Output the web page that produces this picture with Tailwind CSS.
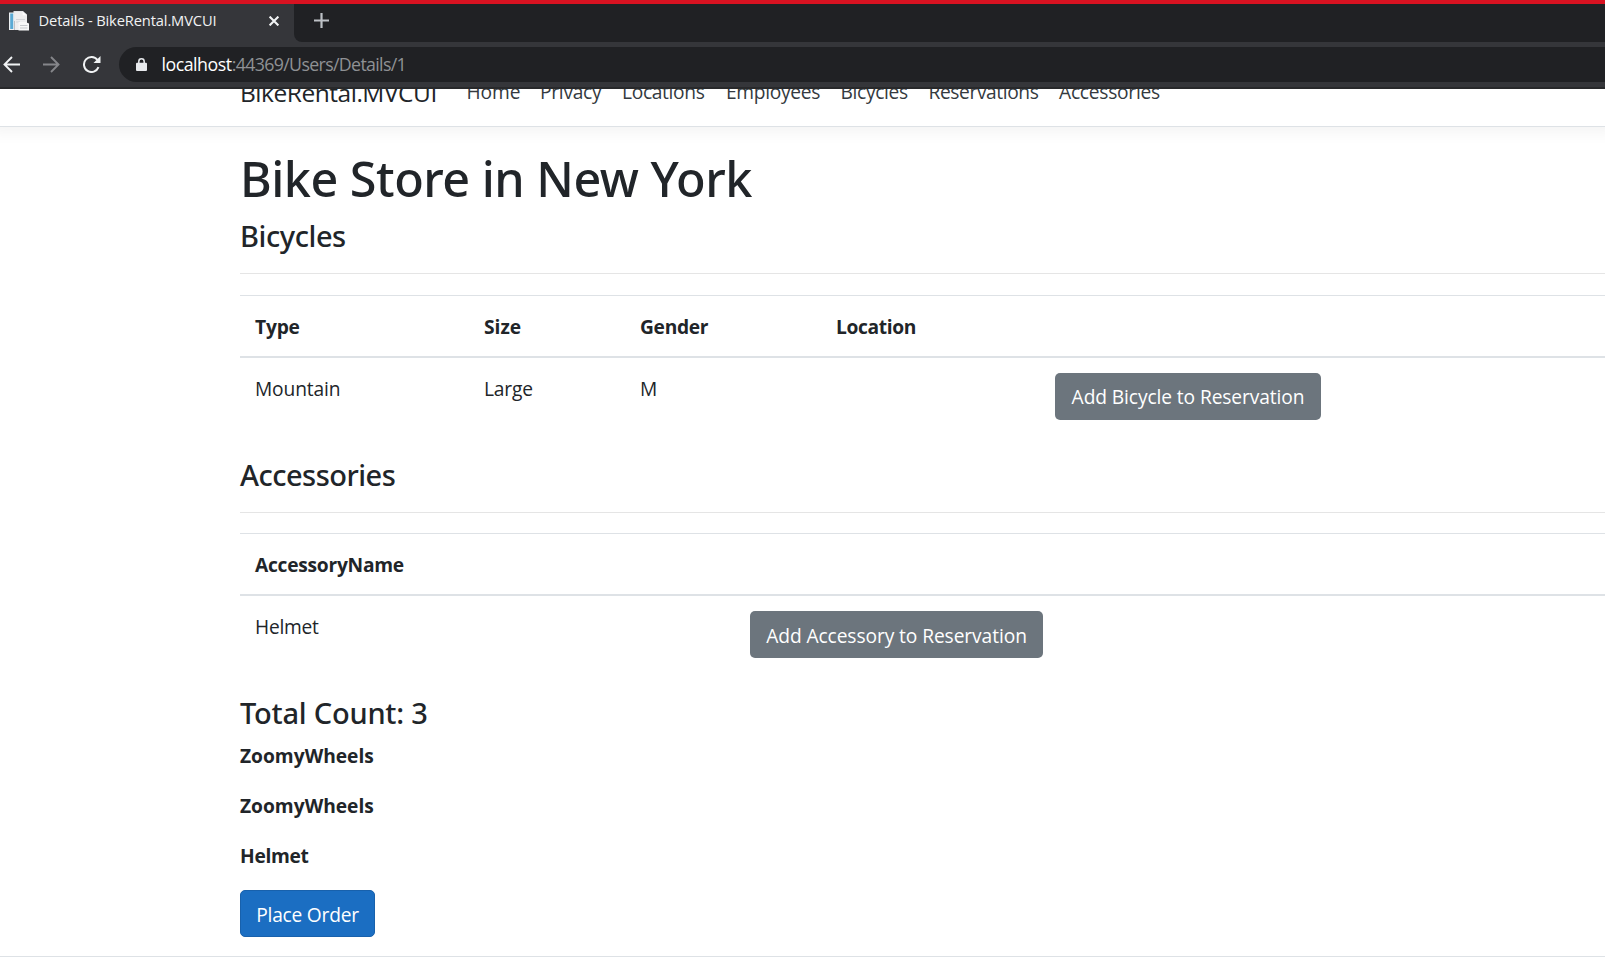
<!DOCTYPE html>
<html lang="en">
<head>
<meta charset="utf-8">
<title>Details - BikeRental.MVCUI</title>
<script src="https://cdn.jsdelivr.net/npm/@tailwindcss/browser@4"></script>
</head>
<body class="flex h-[961px] w-[1605px] flex-col overflow-hidden bg-white font-['Open_Sans','Noto_Sans',sans-serif] text-[19.2px] leading-[30px] text-[#212529]">

<!-- Browser chrome -->
<div class="h-1 shrink-0 bg-[#d81221]"></div>
<div class="flex h-[38px] shrink-0 bg-[#35363a]">
  <div class="flex h-[38px] w-[294px] items-center rounded-tr-[7px] bg-[#35363a] pb-1 pl-[9px]">
    <svg class="h-5 w-5 shrink-0" viewBox="0 0 20 20">
      <path d="M4.500 0H14l4 3.500V10H4.500z" fill="#dfe1e4"/>
      <path d="M0 1.500h5.500V19H0z" fill="#eef1f3"/>
      <path d="M1.200 2.500h3v15.500h-3z" fill="#5aaad4"/>
      <path d="M5.500 .8h8v3.700H18V19H5.500z" fill="#eeeeef"/>
      <path d="M13.500 .5L18 4.500h-4.500z" fill="#fff"/>
      <path d="M7 8.500h9M7 11h4" stroke="#d3d5d9"/>
      <path d="M9.500 11h7l3.500 1.500v7H9.500z" fill="#f8f8f8"/>
      <path d="M11 14.500h7.500M11 17h7.500" stroke="#c6c9cd"/>
    </svg>
    <span class="-mt-[2px] ml-[9.5px] w-[230px] whitespace-nowrap text-[14.7px] leading-5 tracking-[-0.138px] text-[#f1f2f3]">Details - BikeRental.MVCUI</span>
    <svg class="mr-[15px] h-[10px] w-[10px] shrink-0" viewBox="0 0 10 10" fill="none" stroke="#f1f3f4" stroke-width="2.100"><path d="M.6.6l8.800 8.800M9.400.6L.6 9.400"/></svg>
  </div>
  <div class="flex flex-1 items-center rounded-bl-[8px] bg-[#202124] pb-[5px] pl-5">
    <svg class="h-[15px] w-[15px]" viewBox="0 0 15 15" stroke="#bdc1c6" stroke-width="2.200"><path d="M7.500 0v15M0 7.500h15"/></svg>
  </div>
</div>
<div class="flex h-[45px] shrink-0 items-center bg-[#35363a]">
  <svg class="ml-[3px] h-[17px] w-[17px]" viewBox="0 0 17 17" fill="none" stroke="#f1f3f4" stroke-width="1.900"><path d="M17 8.500H1.500M9 1L1.500 8.500 9 16"/></svg>
  <svg class="ml-[23px] h-[17px] w-[17px]" viewBox="0 0 17 17" fill="none" stroke="#85868a" stroke-width="1.900"><path d="M0 8.500h15.500M8 1l7.500 7.500L8 16"/></svg>
  <svg class="ml-[23px] h-[17px] w-[18px]" viewBox="0 0 18 17" fill="none" stroke="#f1f3f4" stroke-width="2"><path d="M15.500 11.200A7.500 7.500 0 1 1 14.500 4"/><path d="M17.500 0v7h-7z" fill="#f1f3f4" stroke="none"/></svg>
  <div class="ml-[18px] flex h-[35px] flex-1 items-center rounded-l-full bg-[#202124] pl-[17px]">
    <svg class="h-[13px] w-[11px]" viewBox="0 0 11 13"><path d="M2.800 6V3.500a2.700 2.700 0 0 1 5.400 0V6" fill="none" stroke="#e8eaed" stroke-width="1.500"/><rect y="4.800" width="11" height="8.200" rx="1" fill="#e8eaed"/></svg>
    <span class="-mt-[2px] ml-[14.5px] w-[70.2px] whitespace-nowrap text-[17.8px] leading-6 tracking-[-0.5px] text-white">localhost</span>
    <span class="-mt-[2px] whitespace-nowrap text-[17.8px] leading-6 tracking-[-0.66px] text-[#8f9194]">:44369/Users/Details/1</span>
  </div>
</div>
<div class="h-[2px] shrink-0 bg-[#28292b]"></div>

<!-- Page viewport, scrolled slightly down -->
<div class="flex-1 overflow-hidden">
  <header class="flex h-[38px] overflow-hidden border-b border-[#dee2e6] pl-60 shadow-[0_-5px_15px_10px_rgba(0,0,0,0.05)]">
    <a class="-mt-[15px] w-[226.5px] whitespace-nowrap text-[24.5px] leading-[37px] tracking-[-0.47px]">BikeRental.MVCUI</a>
    <nav class="-mt-3 flex whitespace-nowrap text-[#343a40]">
      <a class="w-[73.5px] tracking-[-0.1px]">Home</a>
      <a class="w-[82px] tracking-[-0.27px]">Privacy</a>
      <a class="w-[104px] tracking-[-0.33px]">Locations</a>
      <a class="w-[114.5px] tracking-[-0.32px]">Employees</a>
      <a class="w-[88px] tracking-[-0.33px]">Bicycles</a>
      <a class="w-[130.5px] tracking-[-0.4px]">Reservations</a>
      <a class="tracking-[-0.25px]">Accessories</a>
    </nav>
  </header>

  <main class="pt-[21px] pl-60">
    <h1 class="h-[60px] font-['Noto_Sans'] text-[48.5px] leading-[60px] font-medium tracking-[-0.5px]">Bike Store in New York</h1>

    <h4 class="mt-[10px] h-9 font-['Noto_Sans'] text-[29px] leading-9 font-medium tracking-[-0.42px]">Bicycles</h4>
    <hr class="mt-[19px] border-[#e5e5e5]">
    <section class="mt-[21px] border-t border-[#dee2e6]">
      <div class="flex h-[62px] border-b-2 border-[#dee2e6] pt-4 pl-[15px] font-bold">
        <div class="w-[229px] tracking-[-0.2px]">Type</div>
        <div class="w-[156px]">Size</div>
        <div class="w-[196px] tracking-[-0.3px]">Gender</div>
        <div class="tracking-[-0.34px]">Location</div>
      </div>
      <div class="flex h-[77px] pt-[15px] pl-[15px]">
        <div class="w-[229px] pt-px tracking-[-0.14px]">Mountain</div>
        <div class="w-[156px] pt-px tracking-[-0.2px]">Large</div>
        <div class="w-[415px] pt-px">M</div>
        <button class="h-[47px] w-[266px] rounded-[5px] bg-[#6c757d] pt-px whitespace-nowrap tracking-[-0.1px] text-white">Add Bicycle to Reservation</button>
      </div>
    </section>

    <h4 class="mt-[22px] h-9 font-['Noto_Sans'] text-[29px] leading-9 font-medium tracking-[-0.5px]">Accessories</h4>
    <hr class="mt-[19px] border-[#e5e5e5]">
    <section class="mt-5 border-t border-[#dee2e6]">
      <div class="flex h-[62px] border-b-2 border-[#dee2e6] pt-4 pl-[15px] font-bold tracking-[-0.26px]">AccessoryName</div>
      <div class="flex h-[77px] pt-[15px] pl-[15px]">
        <div class="w-[495px] pt-px tracking-[-0.26px]">Helmet</div>
        <button class="h-[47px] w-[293px] rounded-[5px] bg-[#6c757d] pt-[2px] whitespace-nowrap tracking-[-0.09px] text-white">Add Accessory to Reservation</button>
      </div>
    </section>

    <h4 class="mt-[22px] h-9 font-['Noto_Sans'] text-[29px] leading-9 font-medium tracking-[-0.22px]">Total Count: 3</h4>
    <div class="mt-[10px] flex flex-col gap-5 font-bold">
      <p>ZoomyWheels</p>
      <p>ZoomyWheels</p>
      <p class="tracking-[-0.3px]">Helmet</p>
    </div>
    <button class="mt-[19px] block h-[47px] w-[135px] rounded-[5px] border border-[#1861ac] bg-[#1b6ec2] pt-[2px] tracking-[-0.23px] text-white">Place Order</button>
  </main>
  <footer class="mt-[19px] h-6 border-t border-[#dee2e6]"></footer>
</div>
</body>
</html>
